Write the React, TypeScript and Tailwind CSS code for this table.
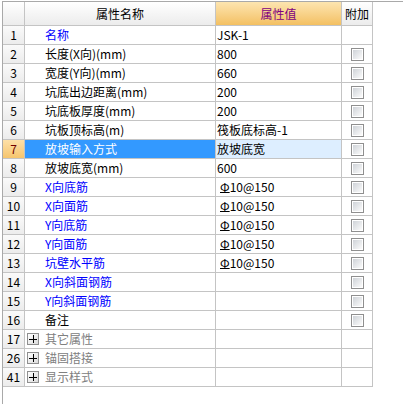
import React from "react";

type Row = {
  num: number;
  name: string;
  value?: string;
  color: "blue" | "black" | "gray";
  cb: boolean;
  group?: boolean;
  rebar?: boolean;
  selected?: boolean;
};

const rows: Row[] = [
  { num: 1, name: "名称", value: "JSK-1", color: "blue", cb: false },
  { num: 2, name: "长度(X向)(mm)", value: "800", color: "black", cb: true },
  { num: 3, name: "宽度(Y向)(mm)", value: "660", color: "black", cb: true },
  { num: 4, name: "坑底出边距离(mm)", value: "200", color: "black", cb: true },
  { num: 5, name: "坑底板厚度(mm)", value: "200", color: "black", cb: true },
  { num: 6, name: "坑板顶标高(m)", value: "筏板底标高-1", color: "black", cb: true },
  { num: 7, name: "放坡输入方式", value: "放坡底宽", color: "black", cb: true, selected: true },
  { num: 8, name: "放坡底宽(mm)", value: "600", color: "black", cb: true },
  { num: 9, name: "X向底筋", value: "10@150", color: "blue", cb: true, rebar: true },
  { num: 10, name: "X向面筋", value: "10@150", color: "blue", cb: true, rebar: true },
  { num: 11, name: "Y向底筋", value: "10@150", color: "blue", cb: true, rebar: true },
  { num: 12, name: "Y向面筋", value: "10@150", color: "blue", cb: true, rebar: true },
  { num: 13, name: "坑壁水平筋", value: "10@150", color: "blue", cb: true, rebar: true },
  { num: 14, name: "X向斜面钢筋", value: "", color: "blue", cb: true },
  { num: 15, name: "Y向斜面钢筋", value: "", color: "blue", cb: true },
  { num: 16, name: "备注", value: "", color: "black", cb: true },
  { num: 17, name: "其它属性", color: "gray", cb: false, group: true },
  { num: 26, name: "锚固搭接", color: "gray", cb: false, group: true },
  { num: 41, name: "显示样式", color: "gray", cb: false, group: true },
];

function CheckBox() {
  return (
    <div className="w-[13px] h-[13px] border border-[#8f8f8f] bg-white p-px">
      <div className="w-full h-full bg-gradient-to-br from-[#cfd3d8] to-[#fbfbfb]" />
    </div>
  );
}

function PlusBox() {
  return (
    <div className="w-[12px] h-[12px] border border-[#8f8f8f] bg-gradient-to-br from-[#ffffff] to-[#dcdcdc] flex items-center justify-center relative">
      <div className="absolute w-[8px] h-px bg-black left-[1px] top-[5px]" />
      <div className="absolute h-[8px] w-px bg-black left-[5px] top-[1px]" />
    </div>
  );
}

export default function App() {
  const font = "font-['Noto_Sans_CJK_SC','Noto_Sans',sans-serif]";
  return (
    <div className={`w-[403px] h-[404px] bg-white pl-[2px] pt-[1px] text-[12px] leading-none ${font}`}>
      <div className="h-full border-t border-l border-[#a9a9a9]">
        <div className="grid grid-cols-[22px_191px_126px_31px]">
          {/* header */}
          <div className="h-[24px] border-r border-b border-[#c4c4c4] bg-gradient-to-b from-[#ffffff] to-[#ececec]" />
          <div className="h-[24px] border-r border-b border-[#c4c4c4] bg-gradient-to-b from-[#ffffff] to-[#ececec] flex items-center justify-center text-black">
            属性名称
          </div>
          <div className="h-[24px] border-r border-b border-[#c4c4c4] bg-gradient-to-b from-[#fde5b0] to-[#f3c061] flex items-center justify-center text-[#800080]">
            属性值
          </div>
          <div className="h-[24px] border-r border-b border-[#c4c4c4] bg-gradient-to-b from-[#ffffff] to-[#ececec] flex items-center justify-center text-black">
            附加
          </div>

          {rows.map((r) => {
            const nameColor =
              r.selected
                ? "text-white"
                : r.color === "blue"
                ? "text-[#0000ff]"
                : r.color === "gray"
                ? "text-[#808080]"
                : "text-black";
            return (
              <React.Fragment key={r.num}>
                <div
                  className={`h-[19px] border-r border-b border-[#c4c4c4] flex items-center justify-center ${
                    r.selected
                      ? "bg-gradient-to-b from-[#fde0a8] to-[#f6c56d] text-[#700000]"
                      : "bg-gradient-to-b from-[#fafafa] to-[#ececec] text-black"
                  }`}
                >
                  {r.num}
                </div>
                <div
                  className={`h-[19px] border-r border-b border-[#c4c4c4] flex items-center ${
                    r.selected ? "bg-[#3399ff]" : "bg-white"
                  } ${r.group ? "pl-[2px] gap-[6px]" : "pl-[20px]"} ${nameColor}`}
                >
                  {r.group && <PlusBox />}
                  <span>{r.name}</span>
                </div>
                <div
                  className={`h-[19px] border-r border-b border-[#c4c4c4] flex items-center pl-[1px] text-black ${
                    r.selected ? "bg-[#ddeeff]" : "bg-white"
                  }`}
                >
                  {r.rebar ? (
                    <span className="pl-[3px] flex items-center">
                      <span className="underline decoration-1 underline-offset-0">Φ</span>
                      <span>{r.value}</span>
                    </span>
                  ) : (
                    <span>{r.value}</span>
                  )}
                </div>
                <div className="h-[19px] border-r border-b border-[#c4c4c4] bg-white flex items-center justify-center">
                  {r.cb && <CheckBox />}
                </div>
              </React.Fragment>
            );
          })}
        </div>
      </div>
    </div>
  );
}
